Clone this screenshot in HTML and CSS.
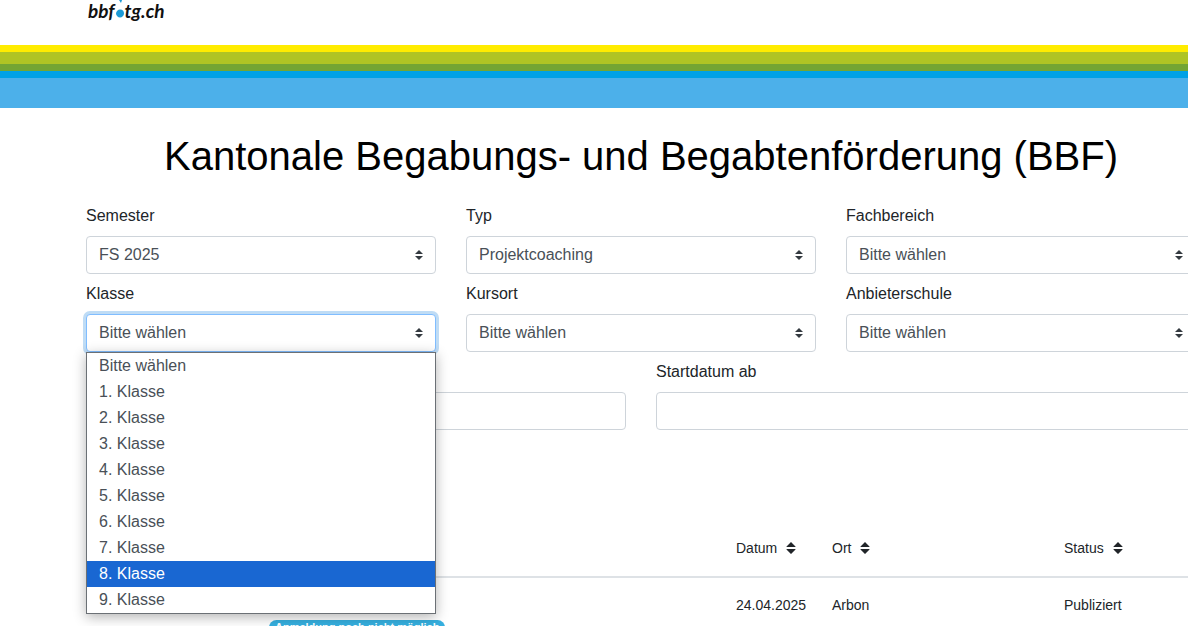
FILE: index.html
```html
<!DOCTYPE html>
<html lang="de">
<head>
<meta charset="utf-8">
<meta name="viewport" content="width=device-width, initial-scale=1">
<title>Kantonale Begabungs- und Begabtenförderung (BBF)</title>
<link rel="stylesheet" href="styles.css">
</head>
<body>
<header class="site-header">
  <a class="logo" href="#">
    <span>bbf</span>
    <svg class="logo-dot" viewBox="0 0 10 24" aria-hidden="true"><path d="M4 0h3L6 3z"/><path d="M1 13.500c0-2 2-4 4-4 3 0 4 2 4 4s-2 4-4 4-4-2-4-4z"/></svg>
    <span>tg.ch</span>
  </a>
</header>
<div class="stripes"><i class="s-yellow"></i><i class="s-lime"></i><i class="s-green"></i><i class="s-blue"></i><i class="s-sky"></i></div>
<main class="container">
  <h1 class="title">Kantonale Begabungs- und Begabtenförderung (BBF)</h1>
  <form class="filters">
    <div class="row three">
      <div class="field"><label for="semester">Semester</label><select class="control select" id="semester"><option>FS 2025</option></select></div>
      <div class="field"><label for="typ">Typ</label><select class="control select" id="typ"><option>Projektcoaching</option></select></div>
      <div class="field"><label for="fach">Fachbereich</label><select class="control select" id="fach"><option>Bitte wählen</option></select></div>
      <div class="field">
        <label for="klasse">Klasse</label><select class="control select focused" id="klasse"><option>Bitte wählen</option></select>
        <ul class="menu" role="listbox" aria-label="Klasse">
          <li role="option">Bitte wählen</li>
          <li role="option">1. Klasse</li>
          <li role="option">2. Klasse</li>
          <li role="option">3. Klasse</li>
          <li role="option">4. Klasse</li>
          <li role="option">5. Klasse</li>
          <li role="option">6. Klasse</li>
          <li role="option">7. Klasse</li>
          <li role="option" class="active" aria-selected="true">8. Klasse</li>
          <li role="option">9. Klasse</li>
        </ul>
      </div>
      <div class="field"><label for="kursort">Kursort</label><select class="control select" id="kursort"><option>Bitte wählen</option></select></div>
      <div class="field"><label for="schule">Anbieterschule</label><select class="control select" id="schule"><option>Bitte wählen</option></select></div>
    </div>
    <div class="row two">
      <div class="field"><input class="control" type="text" aria-label="Suche"></div>
      <div class="field"><label for="start">Startdatum ab</label><input class="control" type="text" id="start"></div>
    </div>
  </form>
  <table class="courses">
    <colgroup><col class="c-nr"><col class="c-name"><col class="c-date"><col class="c-place"><col class="c-status"></colgroup>
    <thead>
      <tr>
        <th></th><th></th>
        <th scope="col">Datum <svg class="sort" viewBox="0 0 12 14" aria-hidden="true"><path d="M6 1l4.500 4.500v.5h-9v-.5zM6 13l4.500-4.500V8h-9v.5z"/></svg></th>
        <th scope="col">Ort <svg class="sort" viewBox="0 0 12 14" aria-hidden="true"><path d="M6 1l4.500 4.500v.5h-9v-.5zM6 13l4.500-4.500V8h-9v.5z"/></svg></th>
        <th scope="col">Status <svg class="sort" viewBox="0 0 12 14" aria-hidden="true"><path d="M6 1l4.500 4.500v.5h-9v-.5zM6 13l4.500-4.500V8h-9v.5z"/></svg></th>
      </tr>
    </thead>
    <tbody>
      <tr>
        <td></td>
        <td class="name"><span class="badge">Anmeldung noch nicht möglich</span></td>
        <td>24.04.2025</td><td>Arbon</td><td>Publiziert</td>
      </tr>
    </tbody>
  </table>
</main>
</body>
</html>
```

FILE: styles.css
```css
* { box-sizing: border-box; }
html { overflow: hidden; }
body {
  margin: 0;
  overflow: hidden;
  height: 100vh;
  background: #fff;
  color: #212529;
  font: 16px/24px "Liberation Sans", Arial, sans-serif;
}
.site-header { height: 45px; padding-left: 88px; }
.logo {
  display: inline-flex;
  align-items: flex-start;
  color: #111;
  font: italic 700 19px/22px Lato, sans-serif;
  text-decoration: none;
}
.logo-dot { width: 10px; height: 24px; fill: #1c9ad6; }
.stripes { display: grid; grid-template-rows: 7px 12px 7px 7px 30px; }
.s-yellow { background: #ffec00; }
.s-lime { background: #afc424; }
.s-green { background: #73a533; }
.s-blue { background: #00a1e6; }
.s-sky { background: #4cb0ea; }
.container { margin: 0 -8px 0 86px; }
.title {
  margin: 0;
  padding: 24px 0;
  color: #000;
  font-size: 40px;
  line-height: 48px;
  font-weight: 400;
  text-align: center;
  white-space: nowrap;
}
.filters { display: grid; gap: 8px; }
.row { display: grid; gap: 8px 30px; align-items: end; }
.three { grid-template-columns: repeat(3, 1fr); }
.two { grid-template-columns: repeat(2, 1fr); }
.field { position: relative; display: grid; gap: 8px; min-width: 0; }
.control {
  width: 100%;
  height: 38px;
  margin: 0;
  padding: 0 12px;
  border: 1px solid #ced4da;
  border-radius: 4px;
  background-color: #fff;
  color: #495057;
  font: inherit;
  outline: 0;
}
.select {
  appearance: none;
  background: #fff url("data:image/svg+xml,%3csvg xmlns='http://www.w3.org/2000/svg' width='4' height='5' viewBox='0 0 4 5'%3e%3cpath fill='%23343a40' d='M2 0L0 2h4zm0 5L0 3h4z'/%3e%3c/svg%3e") no-repeat right 12px center / 8px 10px;
}
.focused { border-color: #80bdff; box-shadow: 0 0 0 3px #bfdcf5; }
.menu {
  position: absolute;
  z-index: 2;
  top: 100%;
  left: 0;
  right: 0;
  margin: 0;
  padding: 0;
  list-style: none;
  background: #fff;
  border: 1px solid #6b7075;
  color: #495057;
  line-height: 26px;
  box-shadow: 0 3px 12px rgba(0, 0, 0, .3);
}
.menu li { padding: 0 12px; }
.menu .active { background: #1967d2; color: #fff; }
.courses {
  width: 100%;
  margin-top: 90px;
  border-collapse: collapse;
  table-layout: fixed;
  font-size: 14px;
  line-height: 20px;
}
.c-nr { width: 171px; }
.c-date { width: 96px; }
.c-place { width: 232px; }
.c-status { width: 144px; }
.courses th {
  padding: 18px 12px;
  font-weight: 400;
  text-align: left;
  border-bottom: 2px solid #dee2e6;
}
.courses td { padding: 17px 12px; vertical-align: top; }
.courses .name { padding-top: 40px; line-height: 16px; }
.sort { width: 12px; height: 14px; margin-left: 4px; vertical-align: -2px; fill: #212529; }
.badge {
  display: inline-block;
  padding: 2px 6px;
  border-radius: 8px;
  background: #36b0e0;
  color: #fff;
  font-size: 11px;
  line-height: 11px;
  font-weight: 700;
  white-space: nowrap;
}
```
